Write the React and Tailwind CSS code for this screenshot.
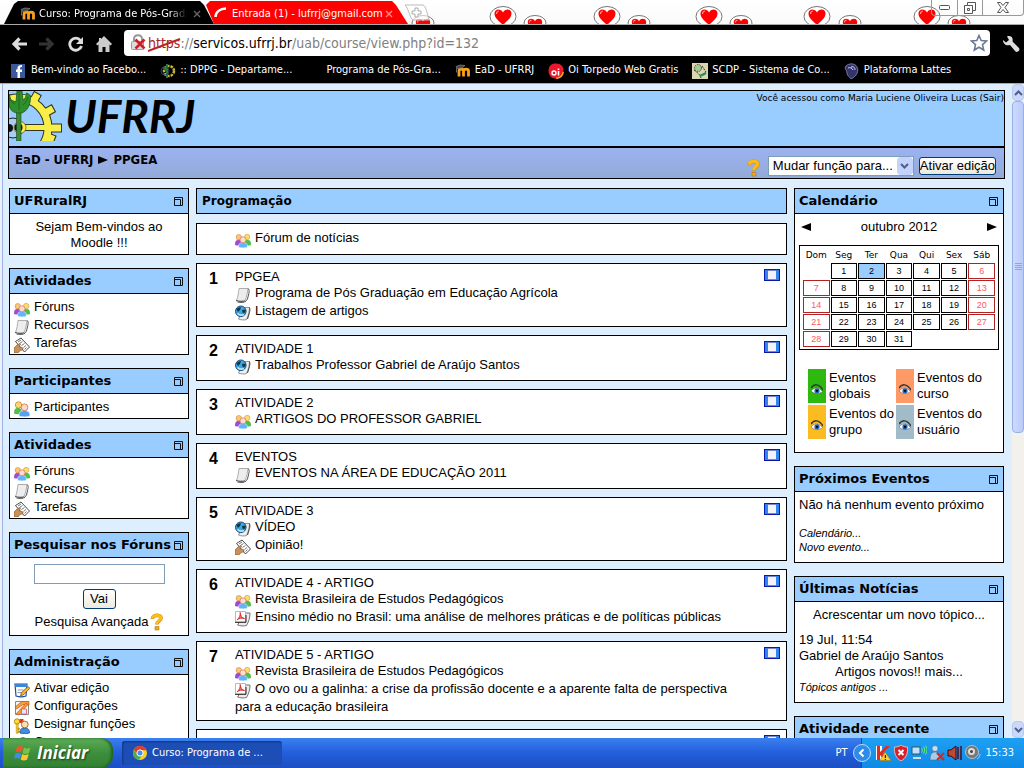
import React from "react";

const UI = "font-['DejaVu_Sans_Condensed','DejaVu_Sans',sans-serif]";

/* ---------- small drawings ---------- */

function Svg({ w = 16, h = 16, className = "", children, box }) {
  return (
    <svg width={w} height={h} viewBox={box || `0 0 ${w} ${h}`} className={`shrink-0 ${className}`} aria-hidden="true">
      {children}
    </svg>
  );
}

const glyphs = {
  forum: (
    <>
      <path d="M0 13c0-4 1-5 3.500-5S7 9 7 13c-2 .8-5 .8-7 0z" fill="#a24ad8" />
      <path d="M9 13c0-4 1-5 3.500-5S16 9 16 13c-2 .8-5 .8-7 0z" fill="#4cc04a" />
      <circle cx="3.800" cy="5.200" r="2.700" fill="#fbc777" stroke="#c98a3a" strokeWidth=".6" />
      <circle cx="12.200" cy="5" r="2.700" fill="#fddb6e" stroke="#cf9a3a" strokeWidth=".6" />
      <path d="M3.500 15c0-3.500 1.500-4.500 4.500-4.500s4.500 1 4.500 4.500c-2 1.200-7 1.200-9 0z" fill="#62b4fb" stroke="#fff" strokeWidth=".5" />
      <circle cx="8" cy="7.800" r="3" fill="#fde0cc" stroke="#d9705a" strokeWidth=".7" />
    </>
  ),
  people: (
    <>
      <path d="M0 12.500c0-4 1-5.500 4-5.500s4 1.500 4 5.500c-3 1-6 1-8 0z" fill="#4fc04a" />
      <circle cx="4.500" cy="4" r="3.200" fill="#fbd97a" stroke="#b97b1a" strokeWidth=".7" />
      <path d="M5 15c0-4 2-5.500 5.500-5.500S16 11 16 15c-3 1.200-8 1.200-11 0z" fill="#4fa4f4" stroke="#fff" strokeWidth=".6" />
      <circle cx="10.500" cy="6.300" r="3.400" fill="#fdd8c2" stroke="#d2583f" strokeWidth=".7" />
    </>
  ),
  page: (
    <>
      <path d="M4 1.500h9c-.5 3-1 8-3 12-2 .8-6 .5-8.500 0C3 10 3.500 5 4 1.500z" fill="#ededed" stroke="#999" strokeWidth=".8" />
      <path d="M1 13.500c3 1.200 7 1.200 9 .5M13 1.500c1.200.5 1.500 2.500.8 5L12.500 12 10 15" fill="none" stroke="#555" strokeWidth="1" />
      <path d="M2.500 15c2 .6 5 .6 7 .2" stroke="#333" fill="none" strokeWidth=".8" />
    </>
  ),
  web: (
    <>
      <path d="M9 2.500h5.500c-.2 4-1 8-3 12-2 .8-5.500.5-8-.5l2-4z" fill="#efefef" stroke="#777" strokeWidth=".8" />
      <path d="M14.500 2.500c.6 2 .4 3 0 5L12.500 14" stroke="#444" fill="none" />
      <circle cx="5.800" cy="6.300" r="5.300" fill="#3fa3e4" stroke="#0c3c73" strokeWidth=".9" />
      <path d="M1.500 4.500c1.500-2 3-2.500 4.500-2L5 5 3 7zM7 5l3.500-.5c.4 2-.5 2.500-1.500 4L7.500 7.500z" fill="#0a3a3d" />
      <path d="M2.500 8.500c2 2 4 2 6.500 1" stroke="#b8ecff" strokeWidth="1.600" fill="none" />
    </>
  ),
  task: (
    <>
      <path d="M1.500 4.500 7 1l8.500 9-5 5z" fill="#fff" stroke="#333" strokeWidth=".9" />
      <path d="M4 5l3-2M5.500 6.500l3-2M7.500 8.500l3-2M9.500 10.500l2.500-2M10.500 12.500l2-2" stroke="#666" strokeWidth=".9" />
      <path d="M0 16v-5l3-3 3-1.500.5 1L5 9.500l4 1.500v1.500L5.500 14 4 16z" fill="#c8905a" stroke="#84532a" strokeWidth=".6" />
    </>
  ),
  pdf: (
    <>
      <path d="M10 2h5c0 4-1 8.500-3.500 12.500-3 .8-6 .5-9-.5l2-3z" fill="#ececec" stroke="#666" strokeWidth=".9" />
      <path d="M.5.500h10v10.500H.5z" fill="#fff" stroke="#aaa" strokeWidth=".8" />
      <path d="M0 11.300h11V4" stroke="#222" fill="none" />
      <path d="M2 9C4.500 7 5.500 4 5.200 1.500 5.500 5 7 7 9.500 7.500 7 7 4 7 2 9z" fill="#f66" stroke="#d22" strokeWidth=".9" />
    </>
  ),
  edit: (
    <>
      <path d="M1 2h12l-1 12c-3 1-7 1-10 0z" fill="#fff" stroke="#1c4f9c" strokeWidth="1.200" />
      <path d="M1 2h12v3H1.300z" fill="#3a86dd" />
      <path d="M3.500 8h6M3.500 10.500h5" stroke="#88a" strokeWidth=".9" />
      <path d="M14 4.500l2 1.800-6.500 6.500-3 1 .8-3z" fill="#f7b52c" stroke="#6a4308" strokeWidth=".7" />
    </>
  ),
  config: (
    <>
      <path d="M1.500 1.500h13v13h-13z" fill="#f6f6f6" stroke="#888" />
      <path d="M1 7 8 1.500h7V5L9 4.500 2.500 9z" fill="#f4a23c" stroke="#b35f0b" strokeWidth=".7" />
      <path d="M2 14 12 3l2 1.500L5 15z" fill="#f29b2e" stroke="#c33" strokeWidth=".5" />
      <path d="M7.500 9h5v5h-5z" fill="#e0e8fb" stroke="#d55" strokeWidth=".8" />
    </>
  ),
  roles: (
    <>
      <circle cx="3" cy="3.500" r="2.700" fill="#ffd83a" stroke="#a97a00" strokeWidth=".8" />
      <path d="M2.200 6h2v9l-1 .8-1-.8zM4 10h1.500v1.500H4zM4 13h1.500v1.300H4z" fill="#ffcf20" stroke="#a97a00" strokeWidth=".5" />
      <path d="M5.500 1h4v4h-4z" fill="#d33a2a" />
      <path d="M6 15c0-4 1.500-5 4.500-5s5 1 5 5c-2.500 1-7 1-9.500 0z" fill="#3d8de6" stroke="#1a3f86" strokeWidth=".7" />
      <circle cx="10.800" cy="6.500" r="3.400" fill="#fbe0b0" stroke="#b5551d" strokeWidth=".9" />
    </>
  ),
  group: (
    <>
      <circle cx="9" cy="5" r="3.500" fill="#f7dc9c" stroke="#a66c1e" />
      <path d="M3 15c0-5 2-6 6-6s5 1 5 6z" fill="#c9a25c" />
    </>
  ),
};

function Icon({ name }) {
  return (
    <Svg className="mr-1 inline-block align-[-6px]">{glyphs[name]}</Svg>
  );
}

function Help({ className = "" }) {
  return (
    <Svg w={13} h={18} className={className}>
      <path d="M2.500 6C2 1.500 11 1 11 5c0 3-4 3.200-4.200 6.500" fill="none" stroke="#d48f14" strokeWidth="3.800" />
      <path d="M2.500 5.500C2.500 1.500 10.800 1.200 10.800 4.800c0 2.800-4 3-4 6.200" fill="none" stroke="#fbbc1c" strokeWidth="3" />
      <path d="M5 13.500h4v3.500H5z" fill="#f4ab12" stroke="#b87408" strokeWidth=".6" />
    </Svg>
  );
}

function Moodle({ className = "" }) {
  return (
    <Svg w={16} h={14} className={className}>
      <path d="M4 12.500V7c0-2.500 4.500-2.500 4.500 0v5.500M8.500 7c0-2.500 5-2.500 5 0v5.500" fill="none" stroke="#f9a11b" strokeWidth="2.800" />
      <path d="M1 2.500 5 1l5 .5L7 4 2.500 4.500z" fill="#444" stroke="#8a8a8a" strokeWidth=".7" />
      <path d="M1.500 3.500v5" stroke="#666" />
    </Svg>
  );
}

function Eye() {
  return (
    <Svg w={12} h={11}>
      <path d="M0 4C3-.5 8-.5 12 6" stroke="#333" strokeWidth="1.500" fill="none" />
      <path d="M0 7C3 3 8 3 11.500 7.500 8 10.500 3 10 0 7z" fill="#fff" stroke="#555" strokeWidth=".5" />
      <circle cx="6" cy="6.800" r="2.600" fill="#1d5fbd" />
      <circle cx="6" cy="6.800" r="1.100" fill="#000" />
    </Svg>
  );
}

const teeth = "M24 11 29 2M34 23l11-6M40 37h13M36 45l10 4";

function UfrrjEmblem() {
  return (
    <Svg w={54} h={50}>
      <g fill="none" stroke="#333322">
        <path d={teeth} strokeWidth="9" />
        <circle cx="9" cy="37" r="30" strokeWidth="9" />
        <path d="M12 36.500h28" strokeWidth="7" />
      </g>
      <g fill="none" stroke="#f8ee4a">
        <path d="M24.500 10 28.500 3M34 23l10-5.500M40 37h12M36 45l9 3.500" strokeWidth="7" />
        <circle cx="9" cy="37" r="30" strokeWidth="7" />
        <path d="M12 36.500h28" strokeWidth="5" />
      </g>
      <circle cx="4" cy="37" r="10" fill="#a9cdf0" stroke="#222" />
      <circle cx="11" cy="36.500" r="6" fill="#f8ee4a" stroke="#333" strokeWidth=".6" />
      <circle cx="0" cy="37" r="4" fill="#111" />
      <circle cx="9.500" cy="36.500" r="4" fill="#111" />
      <path d="M7.500 15h4.500v35H7.500z" fill="#3c8a34" stroke="#1c4a1c" strokeWidth=".6" />
      <path d="M8 0h5l1 9c2-1 3-3 3.500-7 2 .5 3.500 2 4 3 .5 9-4 16-9 17H8C3 21 0 18 0 12V3l2 6 5 2z" fill="#2f8f2c" stroke="#1c5a1c" strokeWidth=".8" />
      <path d="M10 1v18M6 13c-2-1-4-2-5-5M14 14c2-2 4-4 5-8" stroke="#1d6a22" fill="none" />
    </Svg>
  );
}

const bigHearts = [503, 607, 709, 817, 927];
const smallHearts = [423, 535, 639, 741, 850, 959];

function Heart({ x, y, s }) {
  return (
    <g transform={`translate(${x} ${y}) scale(${s})`}>
      <path d="M0 8C-4 4-8.500 1-8.500-3.500-8.500-8-2.500-9 0-4.500 2.500-9 8.500-8 8.500-3.500 8.500 1 4 4 0 8z" fill="#f00" />
      <path d="M-6.500-3c0-2 1.500-3 2.500-3" stroke="#ff9a9a" strokeWidth="1.200" fill="none" />
    </g>
  );
}

function HeartStrip() {
  return (
    <svg className="absolute inset-0" width="1024" height="24" viewBox="0 0 1024 24" aria-hidden="true">
      {bigHearts.map((x) => (
        <g key={x}>
          <ellipse cx={x} cy="16.500" rx="13" ry="10" fill="#fff" stroke="#777" />
          <Heart x={x} y={17} s={1} />
        </g>
      ))}
      {smallHearts.map((x) => (
        <g key={x}>
          <ellipse cx={x} cy="23" rx="11" ry="7.500" fill="#fff" stroke="#777" />
          <Heart x={x} y={25} s={0.85} />
        </g>
      ))}
    </svg>
  );
}

/* ---------- browser window ---------- */

function TabStrip() {
  return (
    <div className="relative flex h-6 shrink-0 items-stretch overflow-hidden bg-gradient-to-b from-white to-[#fafafa]">
      <HeartStrip />
      <div className="relative ml-1 flex w-[210px] items-center bg-black pt-1 pr-3 pl-4 text-white [clip-path:polygon(0_100%,10px_4px,14px_1px,196px_1px,200px_5px,100%_100%)]">
        <Moodle className="mr-[3px]" />
        <span className="w-[148px] overflow-hidden text-[11px] whitespace-nowrap [mask-image:linear-gradient(to_right,#000_88%,transparent)]">Curso: Programa de Pós-Graduação</span>
        <button aria-label="Fechar guia" className="ml-[6px] shrink-0">
          <Svg w={8} h={8}><path d="M1 1l6 6M7 1l-6 6" stroke="#666" strokeWidth="1.400" /></Svg>
        </button>
      </div>
      <div className="relative -ml-2 flex w-[202px] items-center bg-[#f00] pt-1 pl-2 text-white [clip-path:polygon(0_5px,4px_1px,186px_1px,190px_5px,100%_100%,8px_100%)]">
        <Svg w={14} h={14}><path d="M1.500 10C1.500 5 6 1.500 12 1.500" stroke="#fff" strokeWidth="2.500" fill="none" /></Svg>
        <span className="ml-1 text-[11px] whitespace-nowrap">Entrada (1) - lufrrj@gmail.com</span>
        <button aria-label="Fechar guia" className="ml-[2px] shrink-0">
          <Svg w={8} h={8}><path d="M1 1l6 6M7 1l-6 6" stroke="#f88" strokeWidth="1.400" /></Svg>
        </button>
      </div>
      <button aria-label="Nova guia" className="relative -ml-1 self-start pt-1">
        <Svg w={26} h={18}>
          <path d="M1 1h18c3 1 4 8 6 15H9C6 15 5 5 1 1z" fill="#fff" fillOpacity=".6" stroke="#bbb" />
          <path d="M11 4h3v3h3v3h-3v3h-3v-3H8V7h3z" fill="#fff" stroke="#aaa" />
        </Svg>
      </button>
      <div className="relative ml-auto flex h-4 w-[93px] divide-x divide-[#999] rounded-b border-x border-b border-[#999]">
        <button aria-label="Minimizar" className="flex flex-1 items-center justify-center">
          <Svg w={11} h={5}><rect x=".5" y=".5" width="10" height="4" rx="1" fill="#fff" stroke="#555" /></Svg>
        </button>
        <button aria-label="Restaurar" className="flex flex-1 items-center justify-center">
          <Svg w={12} h={12}>
            <path d="M3.500.5h8v8h-3v3h-8v-8h3zM3.500 3.500h5v5M3.500 6.500h2v2h-2z" fill="#fff" stroke="#555" />
          </Svg>
        </button>
        <button aria-label="Fechar" className="flex w-10 items-center justify-center">
          <Svg w={12} h={11}><path d="M.5.5h3L6 3.500 8.500.500h3L8 5.500l3.500 5h-3L6 7.500l-2.500 3h-3L4 5.500z" fill="#fff" stroke="#555" /></Svg>
        </button>
      </div>
    </div>
  );
}

function Toolbar() {
  return (
    <div className="flex h-[34px] shrink-0 items-center gap-3 border-t border-[#aaa] bg-black pt-1 pr-1 pl-3">
      <button aria-label="Voltar">
        <Svg w={15} h={14}><path d="M7.500 1.500 2 7l5.500 5.500M2.500 7H15" stroke="#ddd" strokeWidth="3.200" fill="none" /></Svg>
      </button>
      <button aria-label="Avançar">
        <Svg w={15} h={14}><path d="M7.500 1.500 13 7l-5.500 5.500M12.500 7H0" stroke="#333" strokeWidth="3.200" fill="none" /></Svg>
      </button>
      <button aria-label="Recarregar" className="ml-[2px]">
        <Svg w={16} h={16}>
          <path d="M12.500 4.500A6 6 0 1 0 13.500 10" stroke="#ddd" strokeWidth="2.800" fill="none" />
          <path d="M15 1v7H8z" fill="#ddd" />
        </Svg>
      </button>
      <button aria-label="Página inicial">
        <Svg w={16} h={16}><path d="M8 0l8 8-1.500 1.500L13.500 8.500V16h-4v-5h-3v5h-4V8.500l-1 1L0 8l3-3V2h2v1z" fill="#ccc" /></Svg>
      </button>
      <div className="-mt-px flex h-[26px] min-w-0 flex-1 items-center rounded bg-white pr-[2px] pl-[2px]">
        <Svg w={18} h={18} className="ml-1">
          <path d="M4 8V5c0-5 8-5 8 0v3" stroke="#999" strokeWidth="2" fill="none" />
          <rect x="1.500" y="7.500" width="12" height="8" rx="1" fill="#ddd" stroke="#999" />
          <path d="M5.500 5.500l9 9M14.500 5.500l-9 9" stroke="#d01f2a" strokeWidth="2.600" />
        </Svg>
        <div className="min-w-0 flex-1 text-[14px] leading-5 whitespace-nowrap text-[#808080]" role="textbox" aria-label="Endereço">
          <span className="relative text-[#a52525]">
            https
            <svg className="absolute top-0 left-0" width="34" height="18" viewBox="0 0 34 18" aria-hidden="true"><path d="M0 16 32 4" stroke="#b22" strokeWidth="2" /></svg>
          </span>
          ://<span className="text-black">servicos.ufrrj.br</span>/uab/course/view.php?id=132
        </div>
        <button aria-label="Adicionar aos favoritos">
          <Svg w={18} h={18}><path d="M9 1.500l2.200 5 5.300.5-4 3.600 1.200 5.400L9 13.200 4.300 16l1.200-5.400L1.500 7l5.300-.5z" fill="#fff" stroke="#6b7a94" strokeWidth="1.600" /></Svg>
        </button>
      </div>
      <button aria-label="Ferramentas">
        <Svg w={18} h={18}><path d="M1 5l3 2.500L7 5 5 1.500c4-1.500 6.500 1.500 5.500 5L17 13c1.500 2-1 5-3.500 3.500L8 10C4 11 1 9 1 5z" fill="#ddd" /></Svg>
      </button>
    </div>
  );
}

const bookmarks = [
  ["Bem-vindo ao Facebo...", <><rect width="14" height="14" y="1" fill="#3b5998" /><path d="M9 15V9h2V6.500H9V5.500c0-1 .5-1.500 2-1.500V2C8 2 6.500 3 6.500 5v1.500H5V9h1.500v6z" fill="#fff" /></>],
  [":: DPPG - Departame...", <><circle cx="9" cy="8" r="5" fill="none" stroke="#c9b62e" strokeWidth="2.500" strokeDasharray="2.500 1" /><path d="M7 1v14M3 4l4 4" stroke="#287a3c" strokeWidth="2" /><circle cx="5" cy="8" r="4" fill="none" stroke="#234a66" /></>],
  ["Programa de Pós-Gra...", null],
  ["EaD - UFRRJ", "moodle"],
  ["Oi Torpedo Web Gratis", <><path d="M8 .5c5 0 8 3 7.500 8S12 15.500 8 15.500.5 13 .5 8 3 .5 8 .5z" fill="#e8192c" /><path d="M15.300 9c-.8 4-3 6.200-7 6.300" stroke="#f7a81c" strokeWidth="1.500" fill="none" /><circle cx="6" cy="10" r="2" fill="none" stroke="#fff" strokeWidth="1.400" /><path d="M10.500 8v4.500M10.500 5.500v1.500" stroke="#fff" strokeWidth="1.600" /></>],
  ["SCDP - Sistema de Co...", <><rect width="16" height="16" fill="#d8d6b0" /><circle cx="6" cy="5" r="3.500" fill="#a9c98a" stroke="#445" strokeDasharray="1.500 1" /><path d="M2 7l5 4 2 4M10 3l4 6-3 4" stroke="#333" fill="none" strokeDasharray="2 1" /><path d="M8 13l6-3" stroke="#2a8a5a" strokeWidth="2" /></>],
  ["Plataforma Lattes", <><path d="M2 3c3-3 9-3 11 1s0 9-6 12c-1-2-4-3-4-6S0 6 2 3z" fill="#34346a" stroke="#8d8db5" strokeWidth=".8" /><path d="M4 5c2-1 4 0 5 2M7 4c3-1 4 1 4 3" stroke="#d4d4f6" fill="none" /></>],
];

function Bookmarks() {
  return (
    <nav className="flex h-[26px] shrink-0 items-center gap-[14px] border-b border-[#aaa] bg-black pl-[11px] text-[11px] whitespace-nowrap text-white">
      {bookmarks.map(([label, art]) => (
        <a key={label} href="#" className="flex items-center gap-1">
          {art === "moodle" ? <Moodle /> : <Svg>{art}</Svg>}
          {label}
        </a>
      ))}
    </nav>
  );
}

/* ---------- page ---------- */

function Header() {
  return (
    <header className="border border-black">
      <div className="flex h-[55px] items-start justify-between bg-[#99ccff]">
        <div className="flex items-center">
          <UfrrjEmblem />
          <span className="ml-[2px] font-['Lato',sans-serif] text-[46px] leading-[50px] font-bold text-black italic">UFRRJ</span>
        </div>
        <p className="font-['DejaVu_Sans',sans-serif] text-[9px] leading-[14px]">
          Você acessou como <a href="#">Maria Luciene Oliveira Lucas</a> (<a href="#">Sair</a>)
        </p>
      </div>
      <div className="flex h-8 items-start justify-between border-t-2 border-black bg-gradient-to-b from-[#9bb2f0] to-[#93abd8] pr-2 pl-[6px]">
        <nav className="flex items-center gap-1 pt-[2px] text-[13px] leading-5 font-bold font-['DejaVu_Sans_Condensed','DejaVu_Sans',sans-serif]">
          <a href="#">EaD - UFRRJ</a>
          <Svg w={12} h={8}><path d="M1 0v8l10-4z" /></Svg>
          <a href="#">PPGEA</a>
        </nav>
        <div className="flex items-center pt-[7px] text-[13px]">
          <Help className="mt-1 mr-2" />
          <label className="relative block">
            <span className="sr-only">Mudar função</span>
            <select className="block h-5 w-[146px] appearance-none border border-[#7f9db9] bg-white px-1 leading-[18px]">
              <option>Mudar função para...</option>
            </select>
            <span className="pointer-events-none absolute top-px right-px flex h-[18px] w-4 items-center justify-center rounded-sm bg-[#c3d3fd]">
              <Svg w={9} h={6}><path d="M1 1l3.500 3.500L8 1" stroke="#4d6185" strokeWidth="2" fill="none" /></Svg>
            </span>
          </label>
          <button className="ml-[5px] h-[18px] rounded-[3px] border border-[#003c74] bg-gradient-to-b from-white to-[#eceadf] leading-4 whitespace-nowrap">Ativar edição</button>
        </div>
      </div>
    </header>
  );
}

function Block({ title, className = "", children }) {
  return (
    <section className="border border-black bg-white">
      <div className="flex h-[25px] items-center justify-between border-b border-black bg-[#99ccff] pr-[5px] pl-1">
        <h2 className="font-['DejaVu_Sans',sans-serif] text-[13px] leading-5 font-bold whitespace-nowrap">{title}</h2>
        <button aria-label={`Ocultar ${title}`}>
          <Svg w={9} h={9}><path d="M.5.5h8v8h-8zM.5 2.500h6v6" fill="none" stroke="#111" /></Svg>
        </button>
      </div>
      <div className={className}>{children}</div>
    </section>
  );
}

function LinkList({ items }) {
  return (
    <ul>
      {items.map(([icon, label]) => (
        <li key={label} className="h-[18px]">
          <Icon name={icon} />
          <a href="#">{label}</a>
        </li>
      ))}
    </ul>
  );
}

const activities = [["forum", "Fóruns"], ["page", "Recursos"], ["task", "Tarefas"]];

function LeftColumn() {
  return (
    <aside className="flex w-[180px] shrink-0 flex-col gap-[13px]">
      <Block title="UFRuralRJ" className="px-5 pt-[5px] pb-[3px] text-center">Sejam Bem-vindos ao Moodle !!!</Block>
      <Block title="Atividades" className="px-1 pt-[5px] pb-px"><LinkList items={activities} /></Block>
      <Block title="Participantes" className="px-1 pt-[5px] pb-px"><LinkList items={[["people", "Participantes"]]} /></Block>
      <Block title="Atividades" className="px-1 pt-[5px] pb-px"><LinkList items={activities} /></Block>
      <Block title="Pesquisar nos Fóruns" className="flex flex-col items-center pt-[6px] pb-1">
        <input aria-label="Pesquisar nos Fóruns" className="h-5 w-[131px] border border-[#7f9db9] bg-white px-1" />
        <button className="mt-[5px] h-5 w-[33px] rounded-[3px] border border-[#003c74] bg-gradient-to-b from-white to-[#eceadf]">Vai</button>
        <p className="mt-1 flex h-[18px] items-center gap-[2px]"><a href="#">Pesquisa Avançada</a><Help /></p>
      </Block>
      <Block title="Administração" className="px-1 pt-[5px] pb-px">
        <LinkList items={[["edit", "Ativar edição"], ["config", "Configurações"], ["roles", "Designar funções"], ["group", "Grupos"]]} />
      </Block>
    </aside>
  );
}

const topics = [
  ["PPGEA", [["page", "Programa de Pós Graduação em Educação Agrícola"], ["web", "Listagem de artigos"]]],
  ["ATIVIDADE 1", [["web", "Trabalhos Professor Gabriel de Araújo Santos"]]],
  ["ATIVIDADE 2", [["forum", "ARTIGOS DO PROFESSOR GABRIEL"]]],
  ["EVENTOS", [["page", "EVENTOS NA ÁREA DE EDUCAÇÃO 2011"]]],
  ["ATIVIDADE 3", [["web", "VÍDEO"], ["task", "Opinião!"]]],
  ["ATIVIDADE 4 - ARTIGO", [["forum", "Revista Brasileira de Estudos Pedagógicos"], ["pdf", "Ensino médio no Brasil: uma análise de melhores práticas e de políticas públicas"]]],
  ["ATIVIDADE 5 - ARTIGO", [["forum", "Revista Brasileira de Estudos Pedagógicos"], ["pdf", "O ovo ou a galinha: a crise da profissão docente e a aparente falta de perspectiva para a educação brasileira"]]],
];

function Topic({ number, title, items }) {
  return (
    <section className="flex border border-black bg-white py-[5px]">
      <div className="w-[38px] shrink-0 pl-3 text-[16px] leading-5 font-bold">{number}</div>
      <div className="min-h-[34px] min-w-0 flex-1 pr-4">
        <p>{title}</p>
        <ul>
          {items.map(([icon, label]) => (
            <li key={label}><Icon name={icon} /><a href="#">{label}</a></li>
          ))}
        </ul>
      </div>
      <button aria-label="Mostrar apenas este tópico" className="mr-[6px] self-start">
        <Svg w={16} h={12}>
          <rect width="16" height="12" fill="#0a17a8" />
          <path d="M1 1h3v10H1zM12 1h3v10h-3z" fill="#2f86f0" />
          <path d="M4 1.500h8v9H4z" fill="#f3f3fb" />
        </Svg>
      </button>
    </section>
  );
}

function CenterColumn() {
  return (
    <main className="flex min-w-0 flex-1 flex-col gap-2">
      <h2 className="mb-px flex h-[26px] items-center border border-black bg-[#99ccff] px-[5px] font-['DejaVu_Sans',sans-serif] text-[12px] font-bold">Programação</h2>
      <div className="border border-black bg-white py-[6px] pl-[38px]"><Icon name="forum" /><a href="#">Fórum de notícias</a></div>
      {topics.map(([title, items], i) => <Topic key={title} number={i + 1} title={title} items={items} />)}
      <Topic items={[]} />
    </main>
  );
}

const weeks = [
  [null, 1, 2, 3, 4, 5, 6],
  [7, 8, 9, 10, 11, 12, 13],
  [14, 15, 16, 17, 18, 19, 20],
  [21, 22, 23, 24, 25, 26, 27],
  [28, 29, 30, 31, null, null, null],
];

function dayClass(day, col) {
  if (!day) return "h-4";
  if (day === 2) return "h-4 border border-black bg-[#99ccff]";
  return col === 0 || col === 6 ? "h-4 border border-[#b22222] text-[#ff5a5a]" : "h-4 border border-black";
}

function Calendar() {
  return (
    <Block title="Calendário" className="px-1 pt-1 pb-[13px]">
      <div className="flex h-[18px] items-center justify-between px-[2px]">
        <a href="#" aria-label="Mês anterior"><Svg w={10} h={8}><path d="M10 0v8L0 4z" /></Svg></a>
        <a href="#">outubro 2012</a>
        <a href="#" aria-label="Próximo mês"><Svg w={10} h={8}><path d="M0 0v8l10-4z" /></Svg></a>
      </div>
      <div className="mt-[9px] border border-black px-[2px] pt-px pb-px">
        <table className="w-full table-fixed border-separate border-spacing-px text-center text-[9px] leading-[14px]">
          <thead>
            <tr className="h-[14px] font-['DejaVu_Sans',sans-serif]">
              {["Dom", "Seg", "Ter", "Qua", "Qui", "Sex", "Sáb"].map((d) => <th key={d} className="p-0 font-normal">{d}</th>)}
            </tr>
          </thead>
          <tbody>
            {weeks.map((week, r) => (
              <tr key={r}>
                {week.map((day, c) => <td key={c} className={`p-0 ${dayClass(day, c)}`}>{day}</td>)}
              </tr>
            ))}
          </tbody>
        </table>
      </div>
      <div className="mt-[19px] grid grid-cols-[88px_1fr] gap-y-[2px] pl-[9px]">
        <Legend color="bg-[#2db90f]" label={["Eventos", "globais"]} />
        <Legend color="bg-[#ff9966]" label={["Eventos do", "curso"]} />
        <Legend color="bg-[#fcbb20]" label={["Eventos do", "grupo"]} />
        <Legend color="bg-[#a1bcc8]" label={["Eventos do", "usuário"]} />
      </div>
    </Block>
  );
}

function Legend({ color, label }) {
  return (
    <div className="flex h-[34px] items-center gap-[3px] whitespace-nowrap">
      <div className={`flex h-[34px] w-[18px] items-center justify-center pt-[6px] ${color}`}><Eye /></div>
      <p>{label[0]}<br />{label[1]}</p>
    </div>
  );
}

function RightColumn() {
  return (
    <aside className="flex w-[210px] shrink-0 flex-col gap-[13px]">
      <Calendar />
      <Block title="Próximos Eventos" className="px-1 pt-[5px] pb-2">
        <p className="mb-[13px]">Não há nenhum evento próximo</p>
        <p className="text-[11px] leading-[14px] italic"><a href="#">Calendário...</a><br /><a href="#">Novo evento...</a></p>
      </Block>
      <Block title="Últimas Notícias" className="px-1 pt-[5px] pb-2">
        <p className="mb-[9px] text-center"><a href="#">Acrescentar um novo tópico...</a></p>
        <p>19 Jul, 11:54</p>
        <p>Gabriel de Araújo Santos</p>
        <p className="pl-9">Artigos novos!! <a href="#">mais...</a></p>
        <p className="text-[11px] leading-[14px] italic"><a href="#">Tópicos antigos ...</a></p>
      </Block>
      <Block title="Atividade recente" className="h-10 px-1" />
    </aside>
  );
}

function Scrollbar() {
  return (
    <div className="flex w-3 shrink-0 flex-col bg-[#f3f1ec]" aria-hidden="true">
      <div className="flex h-[17px] items-center justify-center rounded-sm border border-[#b8c8f0] bg-[#c9d8fc]">
        <Svg w={9} h={6}><path d="M1 5l3.500-3.500L8 5" stroke="#4d6185" strokeWidth="2" fill="none" /></Svg>
      </div>
      <div className="flex flex-[331] items-center justify-center rounded-sm border border-[#98b0e8] bg-gradient-to-r from-[#cddafd] to-[#b9cbf9]">
        <Svg w={7} h={8}><path d="M0 .5h7M0 2.500h7M0 4.500h7M0 6.500h7" stroke="#8ca5e8" /></Svg>
      </div>
      <div className="flex-[289]" />
      <div className="flex h-[17px] items-center justify-center rounded-sm border border-[#b8c8f0] bg-[#c9d8fc]">
        <Svg w={9} h={6}><path d="M1 1l3.500 3.500L8 1" stroke="#4d6185" strokeWidth="2" fill="none" /></Svg>
      </div>
    </div>
  );
}

/* ---------- taskbar ---------- */

const tray = [
  ["Antivírus", <><path d="M1 1h6v14H1z" fill="#fff" /><path d="M2 1h3v6l6-6h4L8 8l5 7H9L5 10v5H2z" fill="#d93025" /><path d="M10 7l6 8.500H5z" fill="#fc3" stroke="#a70" strokeWidth=".6" /><path d="M10.300 10v3M10.300 14v1" stroke="#000" /></>],
  ["Segurança", <><path d="M8 0c2 1.500 4 2 6.500 2C15 9 13 13 8 16 3 13 1 9 1.500 2 4 2 6 1.500 8 0z" fill="#d8202a" stroke="#f3b4b4" /><path d="M5.500 5l5 5M10.500 5l-5 5" stroke="#fff" strokeWidth="2" /></>],
  ["Rede", <><rect x="1" y="2" width="8" height="7" fill="#bfe3ff" stroke="#356" /><path d="M2 12h8v2H2z" fill="#cde" /><path d="M10.500 3c1 1.500 1 3 0 4.500M12.500 1.500c1.500 2 1.500 5 0 7M14.500.500c2 3 2 6 0 9" stroke="#6cf06c" fill="none" /></>],
  ["Usuário", <><circle cx="6" cy="3.500" r="3" fill="#bfe0f5" stroke="#568" strokeWidth=".6" /><path d="M1 15c0-6 2-8 5-8s5 2 5 8z" fill="#a4cde8" stroke="#568" strokeWidth=".6" /><path d="M8 8l7 7M15 8l-7 7" stroke="#e0251b" strokeWidth="2.200" /></>],
  ["Som", <><path d="M1 5h3l5-4v14l-5-4H1z" fill="#c4482a" stroke="#401" /><path d="M11 2v12M14 1v14" stroke="#501" strokeWidth="1.400" /></>],
  ["Volume", <><circle cx="7" cy="7" r="6.500" fill="#777" stroke="#bbb" /><circle cx="6.500" cy="6.500" r="3.500" fill="#ddd" /><circle cx="6.500" cy="6.500" r="1.500" fill="#444" /><path d="M12 14c2-1 3-3 3-5" stroke="#9cf" fill="none" /></>],
];

function Taskbar() {
  return (
    <footer className="flex h-[30px] shrink-0 items-stretch bg-gradient-to-b from-[#3a80f0] via-[#245edb] to-[#1c4fc4] text-[11px] text-white">
      <button className="ml-[3px] flex w-[110px] items-center rounded-r-xl bg-gradient-to-b from-[#5eac56] via-[#3c8f3c] to-[#338033] pl-[10px] shadow-[inset_-2px_0_3px_#1f5f22]">
        <Svg w={20} h={18} className="mr-1">
          <path d="M4 3c2-1.500 4-1 6 .2L8.500 8.500c-2-1.200-4-1.500-6-.2z" fill="#f0562a" />
          <path d="M11 3.500c2 1.300 4 1.300 6.500 0L16 9c-2.500 1.300-4.500 1.300-6.500 0z" fill="#7cc24a" />
          <path d="M2.200 9.500c2-1.300 4-1 6 .2L6.700 15c-2-1.200-4-1.500-6-.2z" fill="#3f8bea" />
          <path d="M9.200 10c2 1.300 4 1.300 6.500 0l-1.500 5.500c-2.500 1.300-4.500 1.300-6.500 0z" fill="#fbc92f" />
        </Svg>
        <span className="font-['Open_Sans',sans-serif] text-[17px] leading-6 font-bold italic [text-shadow:1px_1px_2px_#173d17]">Iniciar</span>
      </button>
      <button className="my-[3px] ml-[9px] flex w-[160px] items-center gap-[5px] rounded-[3px] bg-[#1c4eb5] pl-[11px] shadow-[inset_1px_1px_2px_#12358a]">
        <Svg w={14} h={14}>
          <circle cx="7" cy="7" r="7" fill="#fbd023" />
          <path d="M.9 3.500A7 7 0 0 0 6 14l3.500-5.500L4 8z" fill="#4cae4f" />
          <path d="M.9 3.500A7 7 0 0 1 13.300 4.200L7 4.200 4.300 8z" fill="#e33b2e" />
          <circle cx="7" cy="7" r="3.100" fill="#4a8af4" stroke="#fff" />
        </Svg>
        Curso: Programa de ...
      </button>
      <span className="mr-[14px] ml-auto self-center">PT</span>
      <div className="flex items-center bg-gradient-to-b from-[#1ea0f2] to-[#0f8ae6] pr-[10px] shadow-[inset_1px_0_0_#0c4fae]">
        <button aria-label="Mostrar ícones ocultos" className="-ml-2 mr-1">
          <Svg w={18} h={18}><circle cx="9" cy="9" r="8.500" fill="#2f8be8" stroke="#b8dcff" /><path d="M10.500 5.500 7 9l3.500 3.500" stroke="#fff" strokeWidth="2" fill="none" /></Svg>
        </button>
        <div className="flex gap-[2px]">
          {tray.map(([name, art]) => <Svg key={name}>{art}</Svg>)}
        </div>
        <time className="ml-1">15:33</time>
      </div>
    </footer>
  );
}

export default function App() {
  return (
    <div className={`flex h-screen flex-col overflow-hidden bg-[#ddeeff] text-black ${UI}`}>
      <TabStrip />
      <Toolbar />
      <Bookmarks />
      <div className="flex min-h-0 flex-1">
        <div className="w-[3px] shrink-0 border-r border-[#9fb2e0] bg-[#e9effb]" />
        <div className="min-w-0 flex-1 overflow-hidden pt-[6px] pr-[7px] pl-[5px] font-['Liberation_Sans',Arial,sans-serif] text-[13px] leading-4">
          <Header />
          <div className="mt-[9px] mr-px ml-px flex items-start gap-[7px]">
            <LeftColumn />
            <CenterColumn />
            <RightColumn />
          </div>
        </div>
        <Scrollbar />
      </div>
      <Taskbar />
    </div>
  );
}
